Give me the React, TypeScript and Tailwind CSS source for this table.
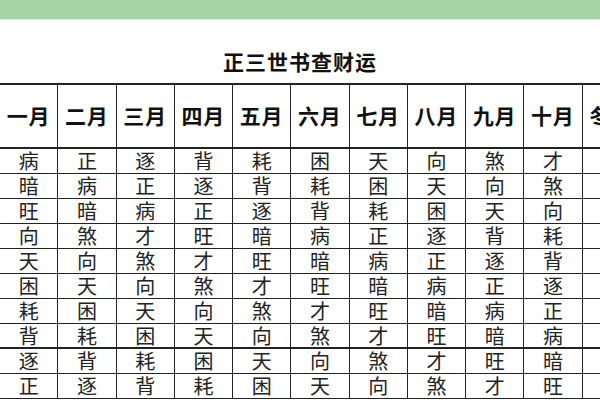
import React from "react"

const months = ["一月", "二月", "三月", "四月", "五月", "六月", "七月", "八月", "九月", "十月", "冬月", "腊月"]

const rows = [
  ["病", "正", "逐", "背", "耗", "困", "天", "向", "煞", "才", "旺", "暗"],
  ["暗", "病", "正", "逐", "背", "耗", "困", "天", "向", "煞", "才", "旺"],
  ["旺", "暗", "病", "正", "逐", "背", "耗", "困", "天", "向", "煞", "才"],
  ["向", "煞", "才", "旺", "暗", "病", "正", "逐", "背", "耗", "困", "天"],
  ["天", "向", "煞", "才", "旺", "暗", "病", "正", "逐", "背", "耗", "困"],
  ["困", "天", "向", "煞", "才", "旺", "暗", "病", "正", "逐", "背", "耗"],
  ["耗", "困", "天", "向", "煞", "才", "旺", "暗", "病", "正", "逐", "背"],
  ["背", "耗", "困", "天", "向", "煞", "才", "旺", "暗", "病", "正", "逐"],
  ["逐", "背", "耗", "困", "天", "向", "煞", "才", "旺", "暗", "病", "正"],
  ["正", "逐", "背", "耗", "困", "天", "向", "煞", "才", "旺", "暗", "病"],
]

export default function App() {
  return (
    <div
      className="w-[600px] h-[400px] overflow-hidden bg-white"
      style={{ fontFamily: '"Noto Sans CJK SC", "Noto Sans", sans-serif' }}
    >
      <div className="h-[20px] bg-[#a5d5a6] border-b border-[#e3f1e3]" />

      <div className="pt-[29px] h-[63px] text-center text-[21px] leading-[24px] font-bold text-[#111] tracking-[1px]">
        正三世书查财运
      </div>

      <div className="w-[699px] grid grid-cols-[repeat(12,58.25px)] border-t-2 border-[#222]">
        {months.map((m) => (
          <div
            key={m}
            className="h-[64px] flex items-center justify-center border-r border-b-2 border-[#222] text-[21px] font-semibold text-[#111] tracking-[1px]"
          >
            {m}
          </div>
        ))}
        {rows.map((row, r) =>
          row.map((c, i) => (
            <div
              key={r + "-" + i}
              className={
                "h-[25px] flex items-center justify-center border-r border-[#222] text-[20px] leading-none text-[#222] " +
                (r === 7 ? "border-b-2" : "border-b")
              }
            >
              {c}
            </div>
          ))
        )}
      </div>
    </div>
  )
}
